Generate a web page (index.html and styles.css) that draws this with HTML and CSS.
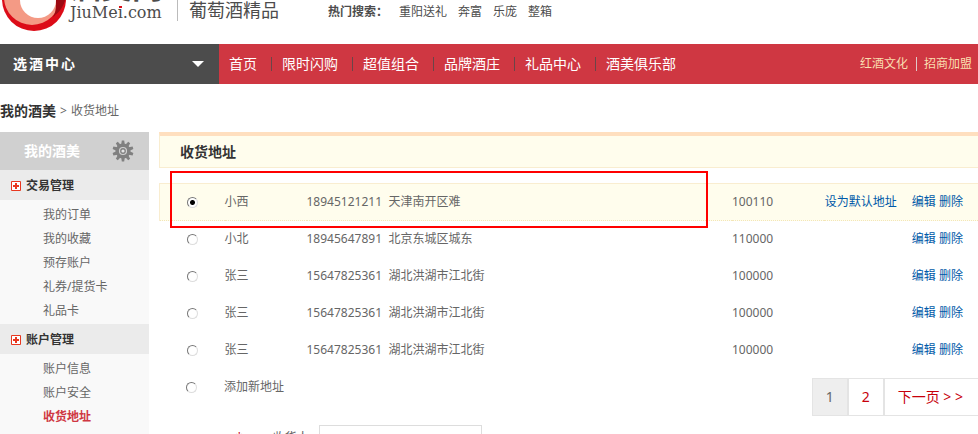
FILE: index.html
```html
<!DOCTYPE html>
<html lang="zh-CN">
<head>
    <meta charset="UTF-8">
    <meta name="viewport" content="width=device-width, initial-scale=1.0">
    <title>收货地址 - 我的酒美</title>
    <link rel="stylesheet" href="styles.css">
</head>
<body>
    <header class="header">
        <a class="logo" href="#" aria-label="酒美网">
            <svg class="logo-mark" width="68" height="68" viewBox="0 0 68 68">
                <circle cx="34" cy="35" r="32" fill="#dc0c18"/>
                <circle cx="32" cy="33" r="28" fill="#f49a85"/>
                <path d="M44 6C60 10 67 24 65 36C64 44 60 49 53 53C58 46 58 24 44 6Z" fill="#9c0a12"/>
                <path d="M65.500 36C64 50 54 62 40 64C50 60 54 54 55 51C60 48 63 42 65.500 36Z" fill="#dc0c18"/>
                <circle cx="38" cy="36" r="18" fill="#fff"/>
            </svg>
            <span class="logo-text">
                <span class="logo-cn">酒美网</span>
                <span class="logo-en">JiuMe<span class="logo-i">i</span>.com</span>
            </span>
        </a>
        <span class="slogan">葡萄酒精品</span>
        <div class="hot">
            <strong>热门搜索：</strong>
            <a href="#">重阳送礼</a>
            <a href="#">奔富</a>
            <a href="#">乐庞</a>
            <a href="#">整箱</a>
        </div>
    </header>

    <nav class="nav">
        <button class="nav-center" type="button">选酒中心
            <svg width="12" height="6" viewBox="0 0 12 6"><path d="M0 0h12L6 6z" fill="#fff"/></svg>
        </button>
        <ul class="nav-list">
            <li><a href="#">首页</a></li>
            <li><a href="#">限时闪购</a></li>
            <li><a href="#">超值组合</a></li>
            <li><a href="#">品牌酒庄</a></li>
            <li><a href="#">礼品中心</a></li>
            <li><a href="#">酒美俱乐部</a></li>
        </ul>
        <ul class="nav-side">
            <li><a href="#">红酒文化</a></li>
            <li><a href="#">招商加盟</a></li>
        </ul>
    </nav>

    <div class="crumbs">
        <a class="crumbs-home" href="#">我的酒美</a>
        <span>&gt;</span>
        <span>收货地址</span>
    </div>

    <div class="main">
        <aside class="side">
            <div class="side-title">
                <span>我的酒美</span>
                <svg width="22" height="22" viewBox="0 0 22 22">
                    <g fill="#808080">
                        <circle cx="11" cy="11" r="7.500"/>
                        <path d="M9.800 0.500h2.400l.6 4h-3.600zM9.800 21.500h2.400l.6-4h-3.600z"/>
                        <path d="M9.800 0.500h2.400l.6 4h-3.600zM9.800 21.500h2.400l.6-4h-3.600z" transform="rotate(36 11 11)"/>
                        <path d="M9.800 0.500h2.400l.6 4h-3.600zM9.800 21.500h2.400l.6-4h-3.600z" transform="rotate(72 11 11)"/>
                        <path d="M9.800 0.500h2.400l.6 4h-3.600zM9.800 21.500h2.400l.6-4h-3.600z" transform="rotate(108 11 11)"/>
                        <path d="M9.800 0.500h2.400l.6 4h-3.600zM9.800 21.500h2.400l.6-4h-3.600z" transform="rotate(144 11 11)"/>
                    </g>
                    <circle cx="11" cy="11" r="3.500" fill="#808080" stroke="#d0d0d0" stroke-width="1.200"/>
                    <circle cx="11" cy="11" r="1.600" fill="#e4e4e4"/>
                </svg>
            </div>
            <h3 class="side-group">
                <svg width="10" height="10" viewBox="0 0 10 10"><path d="M.5.5h9v9h-9z" fill="#fff" stroke="#e8371f"/><path d="M4 2h2v2h2v2H6v2H4V6H2V4h2z" fill="#e8371f"/></svg>
                交易管理
            </h3>
            <ul class="side-list">
                <li><a href="#">我的订单</a></li>
                <li><a href="#">我的收藏</a></li>
                <li><a href="#">预存账户</a></li>
                <li><a href="#">礼券/提货卡</a></li>
                <li><a href="#">礼品卡</a></li>
            </ul>
            <h3 class="side-group">
                <svg width="10" height="10" viewBox="0 0 10 10"><path d="M.5.5h9v9h-9z" fill="#fff" stroke="#e8371f"/><path d="M4 2h2v2h2v2H6v2H4V6H2V4h2z" fill="#e8371f"/></svg>
                账户管理
            </h3>
            <ul class="side-list">
                <li><a href="#">账户信息</a></li>
                <li><a href="#">账户安全</a></li>
                <li><a class="current" href="#">收货地址</a></li>
            </ul>
        </aside>

        <section class="content">
            <h2 class="content-title">收货地址</h2>
            <div class="address">
                <table class="address-table">
                    <colgroup>
                        <col class="col-radio">
                        <col class="col-name">
                        <col>
                        <col class="col-zip">
                        <col class="col-links">
                    </colgroup>
                    <tr class="selected">
                        <td><input type="radio" name="addr" id="addr1" checked></td>
                        <td><label for="addr1">小西</label></td>
                        <td><span class="phone">18945121211</span>天津南开区难</td>
                        <td>100110</td>
                        <td class="links"><a class="set-default" href="#">设为默认地址</a><a href="#">编辑</a> <a href="#">删除</a></td>
                    </tr>
                    <tr>
                        <td><input type="radio" name="addr" id="addr2"></td>
                        <td><label for="addr2">小北</label></td>
                        <td><span class="phone">18945647891</span>北京东城区城东</td>
                        <td>110000</td>
                        <td class="links"><a href="#">编辑</a> <a href="#">删除</a></td>
                    </tr>
                    <tr>
                        <td><input type="radio" name="addr" id="addr3"></td>
                        <td><label for="addr3">张三</label></td>
                        <td><span class="phone">15647825361</span>湖北洪湖市江北街</td>
                        <td>100000</td>
                        <td class="links"><a href="#">编辑</a> <a href="#">删除</a></td>
                    </tr>
                    <tr>
                        <td><input type="radio" name="addr" id="addr4"></td>
                        <td><label for="addr4">张三</label></td>
                        <td><span class="phone">15647825361</span>湖北洪湖市江北街</td>
                        <td>100000</td>
                        <td class="links"><a href="#">编辑</a> <a href="#">删除</a></td>
                    </tr>
                    <tr>
                        <td><input type="radio" name="addr" id="addr5"></td>
                        <td><label for="addr5">张三</label></td>
                        <td><span class="phone">15647825361</span>湖北洪湖市江北街</td>
                        <td>100000</td>
                        <td class="links"><a href="#">编辑</a> <a href="#">删除</a></td>
                    </tr>
                </table>
                <div class="marker"></div>
            </div>
            <div class="below">
                <div class="add">
                    <input type="radio" name="addr" id="addr-new">
                    <label for="addr-new">添加新地址</label>
                </div>
                <div class="pages">
                    <span class="page on">1</span>
                    <a class="page" href="#">2</a>
                    <a class="page" href="#">下一页 &gt; &gt;</a>
                </div>
            </div>
            <form class="form">
                <label for="receiver"><span class="star">*</span>收货人</label>
                <input type="text" id="receiver">
            </form>
        </section>
    </div>
</body>
</html>
```

FILE: styles.css
```css
* {
    box-sizing: border-box;
}

body {
    margin: 0;
    height: 100vh;
    overflow: hidden;
    font: 12px/18px "Noto Sans", "Noto Sans CJK SC", sans-serif;
    color: #666;
    background: #fff;
}

ul, h2, h3 {
    margin: 0;
    padding: 0;
    list-style: none;
}

a {
    color: inherit;
    text-decoration: none;
}

svg {
    display: block;
    flex: none;
}

/* header */
.header {
    display: flex;
    align-items: flex-end;
    height: 44px;
    padding-bottom: 12px;
    overflow: hidden;
}

.logo {
    display: flex;
    align-items: flex-end;
    color: #4c4c4c;
}

.logo-text {
    display: flex;
    flex-direction: column;
    width: 109px;
    padding: 0 0 9px 2px;
}

.logo-cn {
    font-size: 31px;
    font-weight: bold;
    line-height: 34px;
}

.logo-en {
    font: 16px/20px "DejaVu Serif", serif;
}

/* red dot of the last i */
.logo-i {
    position: relative;
}

.logo-i::after {
    content: "";
    position: absolute;
    top: 3px;
    left: 1px;
    width: 3px;
    height: 2px;
    background: #dc0c18;
}

.slogan {
    margin-bottom: 11px;
    padding-left: 11px;
    border-left: 1px solid #bbb;
    font-size: 18px;
    line-height: 22px;
    color: #4c4c4c;
}

.hot {
    display: flex;
    gap: 11px;
    margin: 0 0 11px 49px;
    color: #4c4c4c;
}

.hot strong {
    width: 60px;
}

/* nav */
.nav {
    display: flex;
    align-items: center;
    height: 40px;
    background: #cf3742;
    color: #fff;
}

.nav-center {
    display: flex;
    align-items: center;
    justify-content: space-between;
    width: 219px;
    height: 40px;
    padding: 0 15px 0 13px;
    border: 0;
    background: #4c4c4c;
    color: #fff;
    font: bold 14px/20px "Noto Sans", "Noto Sans CJK SC", sans-serif;
    letter-spacing: 2px;
}

.nav-list,
.nav-side {
    display: flex;
}

.nav-list {
    font-size: 14px;
}

.nav-list li {
    padding: 0 14px 0 10px;
    line-height: 14px;
    border-right: 1px solid #6b4548;
}

.nav-list li:last-child {
    border-right: 0;
}

.nav-side {
    margin-left: auto;
    padding-right: 6px;
    color: #f9dfb0;
}

.nav-side li {
    line-height: 14px;
}

.nav-side li + li {
    margin-left: 8px;
    padding-left: 7px;
    border-left: 1px solid #e0c8c8;
}

/* breadcrumb */
.crumbs {
    display: flex;
    align-items: center;
    gap: 4px;
    height: 48px;
    padding-top: 6px;
}

.crumbs-home {
    font-size: 14px;
    font-weight: bold;
    color: #333;
}

.main {
    display: flex;
    gap: 10px;
}

/* left menu */
.side {
    flex: none;
    width: 149px;
    background: #f9f9f9;
}

.side-title {
    display: flex;
    align-items: center;
    justify-content: space-between;
    height: 38px;
    padding: 0 15px 0 24px;
    background: #d0d0d0;
    color: #fff;
    font-size: 14px;
    font-weight: bold;
}

.side-group {
    display: flex;
    align-items: center;
    gap: 5px;
    height: 30px;
    padding: 1px 0 0 11px;
    background: #ebebeb;
    color: #333;
    font-size: 12px;
}

.side-list {
    padding: 3px 0 1px 43px;
    line-height: 24px;
}

.side-list .current {
    color: #cf3742;
    font-weight: bold;
}

/* address list */
.content {
    flex: 1;
    min-width: 0;
}

.content-title {
    height: 36px;
    margin-bottom: 15px;
    padding-left: 20px;
    border: 1px solid #f9edd0;
    border-top: 4px solid #ffdfbf;
    border-right: 0;
    background: #fffded;
    color: #333;
    font-size: 14px;
    line-height: 32px;
}

.address {
    position: relative;
}

.address-table {
    width: 100%;
    table-layout: fixed;
    border-collapse: collapse;
}

.col-radio {
    width: 65px;
}

.col-name {
    width: 82px;
}

.col-zip {
    width: 92px;
}

.col-links {
    width: 154px;
}

.address-table td {
    height: 37px;
    padding: 0;
}

.address-table td:first-child {
    padding-left: 27px;
}

.selected td {
    border-top: 1px solid #f9edd0;
    border-bottom: 1px dotted #f3e6b8;
    background: #fffded;
}

.selected td:first-child {
    border-left: 1px solid #f9edd0;
}

.phone {
    display: inline-block;
    width: 82px;
}

.address-table .links {
    padding-right: 15px;
    color: #0059a8;
    text-align: right;
    white-space: nowrap;
}

.set-default {
    margin-right: 15px;
}

/* red frame round the default address */
.marker {
    position: absolute;
    top: -12px;
    left: 11px;
    right: 270px;
    height: 57px;
    border: 2px solid #f00;
    pointer-events: none;
}

input[type="radio"] {
    display: block;
    appearance: none;
    width: 11px;
    height: 11px;
    margin: 0;
    border: 1px solid;
    border-color: #777 #ddd #ddd #777;
    border-radius: 50%;
    background: #fff;
}

input[type="radio"]:checked {
    background: radial-gradient(circle, #000 2px, #fff 3px);
}

/* new address + paging */
.below {
    display: flex;
    justify-content: space-between;
    align-items: flex-start;
}

.add {
    display: flex;
    align-items: center;
    gap: 27px;
    height: 37px;
    padding-left: 27px;
}

.pages {
    display: flex;
    margin: 9px -4px 0 0;
    font-size: 14px;
}

.page {
    height: 38px;
    padding: 0 13px;
    border: 1px solid #e4e4e4;
    color: #c7000b;
    line-height: 36px;
}

.page:last-child {
    padding-right: 18px;
}

.page.on {
    background: #eee;
    color: #666;
}

.form {
    display: flex;
    align-items: center;
    margin-top: 9px;
    padding-left: 77px;
}

.form label {
    width: 83px;
    white-space: nowrap;
}

.star {
    margin-right: 30px;
    color: #c7000b;
}

.form input {
    width: 163px;
    height: 26px;
    border: 1px solid #ddd;
}
```
